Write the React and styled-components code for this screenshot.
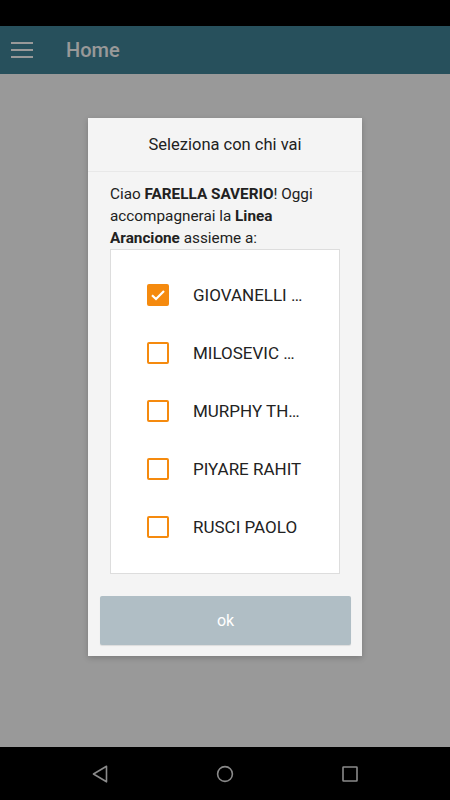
import React from 'react';
import styled, {createGlobalStyle} from "styled-components";

const GlobalStyle = createGlobalStyle`
  html, body {
    margin: 0;
    padding: 0;
    background: #000;
  }
  body {
    font-family: Roboto, "Noto Sans", "Liberation Sans", sans-serif;
  }
`;

const people = [
    {name: 'GIOVANELLI …', checked: true},
    {name: 'MILOSEVIC …', checked: false},
    {name: 'MURPHY TH…', checked: false},
    {name: 'PIYARE RAHIT', checked: false},
    {name: 'RUSCI PAOLO', checked: false},
];

const App = () => {
    return <Screen>
        <GlobalStyle/>
        <StatusBar/>
        <AppBar>
            <MenuIcon>
                <span/><span/><span/>
            </MenuIcon>
            <Title>Home</Title>
        </AppBar>
        <Content/>
        <NavBar>
            <svg width="18" height="18" viewBox="0 0 18 18">
                <path d="M15.5 1.2 L2.5 9 L15.5 16.8 Z" fill="none" stroke="#8a8a8a" strokeWidth="1.6" strokeLinejoin="round"/>
            </svg>
            <svg width="18" height="18" viewBox="0 0 18 18">
                <circle cx="9" cy="9" r="7.4" fill="none" stroke="#8a8a8a" strokeWidth="1.6"/>
            </svg>
            <svg width="18" height="18" viewBox="0 0 18 18">
                <rect x="2" y="2" width="14" height="14" fill="none" stroke="#8a8a8a" strokeWidth="1.6" rx="0.5"/>
            </svg>
        </NavBar>
        <Scrim>
            <Dialog>
                <Header>Seleziona con chi vai</Header>
                <Body>
                    <Intro>
                        Ciao <b>FARELLA SAVERIO</b>! Oggi accompagnerai la <b>Linea Arancione</b> assieme a:
                    </Intro>
                    <List>
                        {people.map(p => <Row key={p.name}>
                            <Check checked={p.checked}>
                                {p.checked && <svg width="18" height="18" viewBox="0 0 18 18">
                                    <path d="M3 9.2 L7 13 L15 5" fill="none" stroke="#fff" strokeWidth="2.2"/>
                                </svg>}
                            </Check>
                            <Label>{p.name}</Label>
                        </Row>)}
                    </List>
                </Body>
                <Footer>
                    <OkButton>ok</OkButton>
                </Footer>
            </Dialog>
        </Scrim>
    </Screen>;
};

const Screen = styled.div`
  position: relative;
  width: 450px;
  height: 800px;
  display: flex;
  flex-direction: column;
  overflow: hidden;
  background: #fff;
`;

const StatusBar = styled.div`
  height: 26px;
  background: #000;
`;

const AppBar = styled.div`
  height: 48px;
  background: #418599;
  display: flex;
  align-items: center;
`;

const MenuIcon = styled.div`
  width: 22px;
  margin-left: 11px;
  display: flex;
  flex-direction: column;
  gap: 5px;
  span {
    display: block;
    height: 2px;
    background: #fff;
  }
`;

const Title = styled.div`
  margin-left: 33px;
  font-size: 20px;
  font-weight: 500;
  color: #fff;
`;

const Content = styled.div`
  flex: 1;
  background: #fff;
`;

const NavBar = styled.div`
  height: 53px;
  background: #000;
  display: flex;
  align-items: center;
  justify-content: space-between;
  padding: 0 91px 0 91px;
  svg {
    display: block;
  }
`;

const Scrim = styled.div`
  position: absolute;
  top: 26px;
  bottom: 53px;
  left: 0;
  right: 0;
  background: rgba(0, 0, 0, 0.4);
  display: flex;
  align-items: center;
  justify-content: center;
`;

const Dialog = styled.div`
  width: 274px;
  background: #f4f4f4;
  box-shadow: 0 2px 6px rgba(0, 0, 0, 0.2);
`;

const Header = styled.div`
  height: 53px;
  display: flex;
  align-items: center;
  justify-content: center;
  font-size: 16.5px;
  color: #212121;
  border-bottom: 1px solid #e8e8e8;
`;

const Body = styled.div`
  padding: 11px 22px 0 22px;
`;

const Intro = styled.div`
  font-size: 15.3px;
  line-height: 22px;
  color: #212121;
  b {
    font-weight: 700;
  }
`;

const List = styled.div`
  background: #fff;
  border: 1px solid #dddddd;
  padding: 16px 0 17px 0;
`;

const Row = styled.div`
  height: 58px;
  display: flex;
  align-items: center;
  padding-left: 36px;
`;

const Check = styled.div`
  box-sizing: border-box;
  width: 22px;
  height: 22px;
  border-radius: 2px;
  border: 2px solid #f58a0e;
  background: ${p => p.checked ? '#f58a0e' : 'transparent'};
  display: flex;
  align-items: center;
  justify-content: center;
`;

const Label = styled.div`
  margin-left: 24px;
  font-size: 17px;
  color: #222;
  white-space: nowrap;
`;

const Footer = styled.div`
  padding: 22px 11px 11px 12px;
`;

const OkButton = styled.div`
  height: 49px;
  border-radius: 2px;
  background: #b0bec5;
  color: #fff;
  font-size: 16px;
  display: flex;
  align-items: center;
  justify-content: center;
  box-shadow: 0 1px 1px rgba(0, 0, 0, 0.1);
`;

export default App;
